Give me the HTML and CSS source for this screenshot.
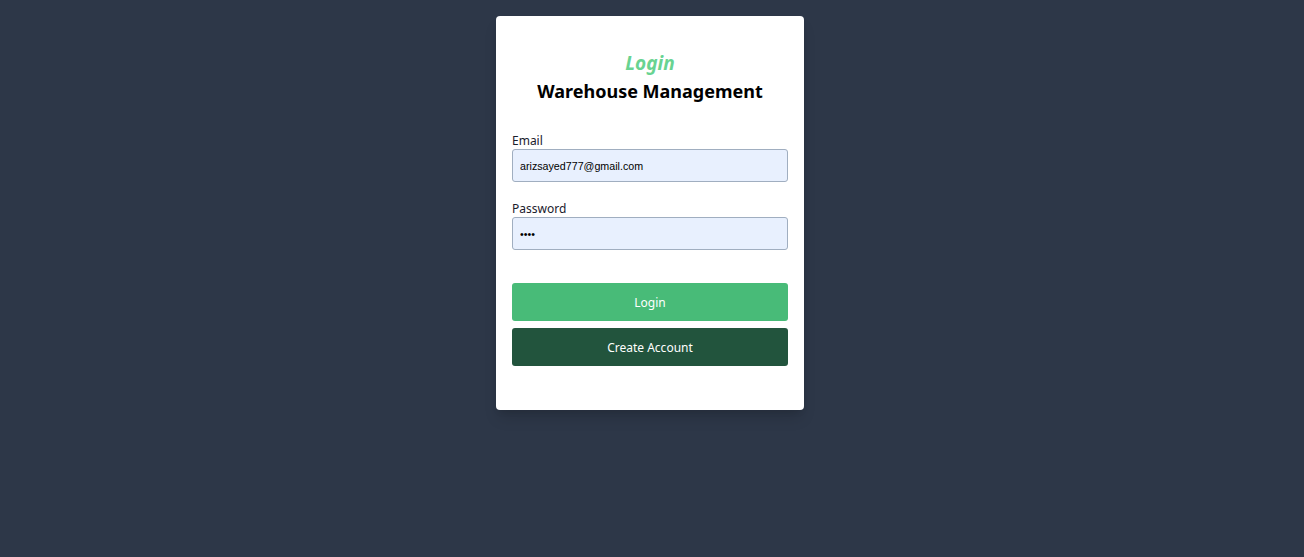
FILE: index.html
```html
<!DOCTYPE html>
<html lang="en">
<head>
<meta charset="utf-8">
<title>Login - Warehouse Management</title>
<link rel="stylesheet" href="styles.css">
</head>
<body>
<main class="page">
  <form class="card">
    <div class="titles">
      <h2 class="subtitle">Login</h2>
      <h1 class="title">Warehouse Management</h1>
    </div>
    <div class="field">
      <label class="label" for="email">Email</label>
      <input class="input" id="email" type="email" value="arizsayed777@gmail.com">
    </div>
    <div class="field field-second">
      <label class="label" for="password">Password</label>
      <input class="input" id="password" type="password" value="1234">
    </div>
    <div class="actions">
      <button class="btn btn-primary" type="button">Login</button>
      <button class="btn btn-dark" type="button">Create Account</button>
    </div>
  </form>
</main>
</body>
</html>
```
FILE: styles.css
```css
* { box-sizing: border-box; }
html, body {
  margin: 0;
  padding: 0;
  height: 100%;
}
body {
  background: #2d3748;
  font-family: "Noto Sans", "Open Sans", sans-serif;
}
.page {
  display: flex;
  justify-content: center;
  padding-top: 16px;
  padding-right: 4px;
}
.card {
  width: 308px;
  background: #ffffff;
  border-radius: 4px;
  padding: 33px 16px 44px;
  box-shadow: 0 10px 15px -3px rgba(0,0,0,0.15), 0 4px 6px -2px rgba(0,0,0,0.08);
}
.titles {
  text-align: center;
}
.subtitle {
  margin: 0;
  font-size: 19px;
  line-height: 28px;
  font-weight: 700;
  font-style: italic;
  color: #68d391;
}
.title {
  margin: 0;
  font-size: 18px;
  line-height: 28px;
  font-weight: 700;
  color: #000000;
}
.field {
  display: flex;
  flex-direction: column;
  margin-top: 26px;
}
.field-second {
  margin-top: 17px;
}
.label {
  font-size: 12px;
  line-height: 17px;
  padding-top: 1px;
  color: #1a202c;
}
.input {
  height: 33px;
  width: 100%;
  border: 1px solid #a0aec0;
  border-radius: 3px;
  background: #e8f0fe;
  padding: 0 7px;
  font-family: "Liberation Sans", Arial, sans-serif;
  font-size: 10.7px;
  color: #000000;
  outline: none;
}
.actions {
  display: flex;
  flex-direction: column;
  gap: 7px;
  margin-top: 33px;
}
.btn {
  height: 38px;
  width: 100%;
  border: none;
  border-radius: 3px;
  font-family: "Noto Sans", "Open Sans", sans-serif;
  font-size: 12px;
  color: #ffffff;
  cursor: pointer;
}
.btn-primary { background: #48bb78; }
.btn-dark { background: #22543d; }
```
